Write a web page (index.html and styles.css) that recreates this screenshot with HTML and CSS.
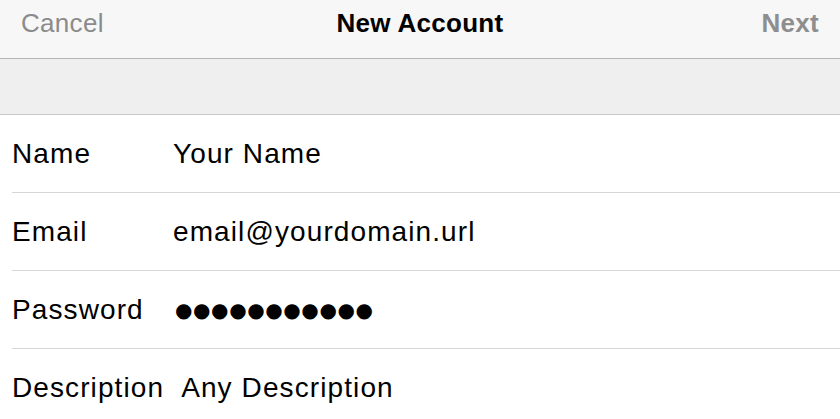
FILE: index.html
```html
<!DOCTYPE html>
<html>
<head>
<meta charset="utf-8">
<link rel="stylesheet" href="styles.css">
</head>
<body>
<div class="nav">
  <span class="nav-btn cancel">Cancel</span>
  <span class="title">New Account</span>
  <span class="nav-btn next">Next</span>
</div>
<div class="band"></div>
<div class="list">
  <div class="row"><span class="label">Name</span><span class="value">Your Name</span></div>
  <div class="row"><span class="label">Email</span><span class="value">email@yourdomain.url</span></div>
  <div class="row"><span class="label">Password</span><span class="value dots">●●●●●●●●●●●</span></div>
  <div class="row"><span class="label">Description</span><span class="value">Any Description</span></div>
</div>
</body>
</html>
```
FILE: styles.css
```css
html, body {
  margin: 0;
  padding: 0;
  background: #ffffff;
  font-family: "Liberation Sans", Arial, sans-serif;
  overflow: hidden;
}
.nav {
  height: 58px;
  box-sizing: border-box;
  background: #f7f7f7;
  border-bottom: 1px solid #b4b4b4;
  display: grid;
  grid-template-columns: 1fr auto 1fr;
  align-items: center;
  padding: 0 21px 12px;
  height: 59px;
}
.nav-btn {
  font-size: 26px;
  color: #8b8b8b;
  letter-spacing: 0.3px;
}
.next {
  font-weight: bold;
  color: #8e8e8e;
  justify-self: end;
}
.title {
  font-size: 26px;
  font-weight: bold;
  color: #000;
  letter-spacing: 0.3px;
}
.band {
  height: 55px;
  background: #efeff0;
  border-bottom: 1px solid #c8c8c8;
}
.list {
  padding-left: 12px;
}
.row {
  height: 77px;
  border-bottom: 1px solid #d6d6d6;
  display: flex;
  align-items: center;
  font-size: 28px;
  color: #000;
  letter-spacing: 1.1px;
}
.label {
  min-width: 144px;
  margin-right: 17px;
  flex: none;
}
.dots {
  font-family: "DejaVu Sans", sans-serif;
  font-size: 20px;
  letter-spacing: 0.6px;
  margin-left: 2px;
}
```
